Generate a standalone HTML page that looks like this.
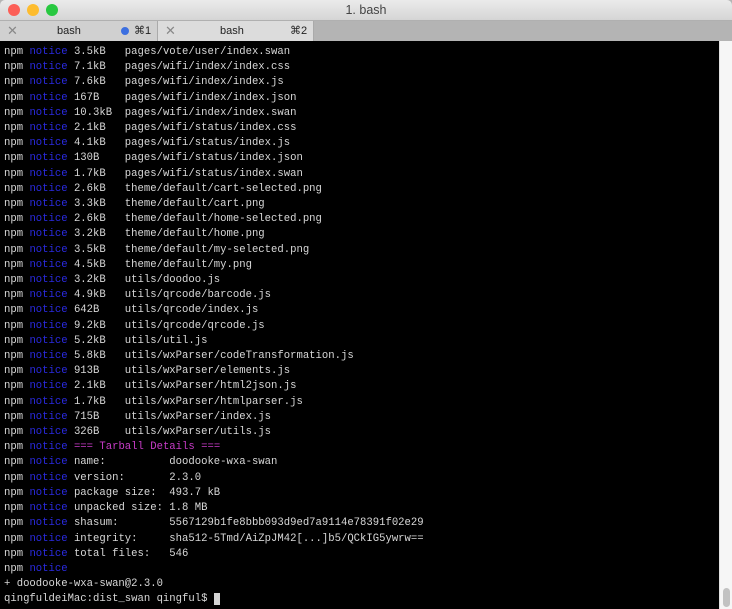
<!DOCTYPE html><html><head><style>
body{margin:0;width:732px;height:609px;overflow:hidden;background:#b4b4b4;font-family:"Liberation Sans",sans-serif}
#title{position:absolute;left:0;top:0;width:732px;height:20px;background:linear-gradient(#ebebeb,#d5d5d5);border-bottom:1px solid #b0b0b0;border-radius:5px 5px 0 0;text-align:center;font-size:12.5px;line-height:20px;color:#444}
.dot{position:absolute;top:4px;width:12px;height:12px;border-radius:50%}
#tabs{position:absolute;top:21px;left:0;width:732px;height:20px;background:#b4b4b4}
.tab{position:absolute;top:0;height:20px;font-size:11px;line-height:20px;color:#222}
#term{position:absolute;top:41px;left:0;width:719px;height:568px;background:#000}
pre{margin:0;padding:4px 0 0 4px;font-family:"Liberation Mono",monospace;font-size:10.6px;line-height:15.2px;color:#d8d8d8}
.b{color:#2a2ae0}.m{color:#c83cc8}
#sb{position:absolute;left:719px;top:41px;width:13px;height:568px;background:#f6f6f6;border-left:1px solid #e0e0e0}
</style></head><body>
<div id="title">1. bash</div>
<div class="dot" style="left:8px;background:#fc5f57"></div>
<div class="dot" style="left:27px;background:#fdbc2e"></div>
<div class="dot" style="left:46px;background:#28c840"></div>
<div id="tabs">
<div class="tab" style="left:0;width:157px;background:#d0d0d0;border-right:1px solid #aaa"><span style="position:absolute;left:7px;color:#888;font-size:13px">✕</span><span style="position:absolute;left:57px">bash</span><span style="position:absolute;left:121px;top:6px;width:8px;height:8px;border-radius:50%;background:#3c6fe0"></span><span style="position:absolute;left:134px">⌘1</span></div>
<div class="tab" style="left:158px;width:155px;background:#dcdcdc;border-right:1px solid #aaa"><span style="position:absolute;left:7px;color:#888;font-size:13px">✕</span><span style="position:absolute;left:62px">bash</span><span style="position:absolute;left:132px">⌘2</span></div>
</div>
<div id="term"><pre>npm <span class="b">notice</span> 3.5kB   pages/vote/user/index.swan
npm <span class="b">notice</span> 7.1kB   pages/wifi/index/index.css
npm <span class="b">notice</span> 7.6kB   pages/wifi/index/index.js
npm <span class="b">notice</span> 167B    pages/wifi/index/index.json
npm <span class="b">notice</span> 10.3kB  pages/wifi/index/index.swan
npm <span class="b">notice</span> 2.1kB   pages/wifi/status/index.css
npm <span class="b">notice</span> 4.1kB   pages/wifi/status/index.js
npm <span class="b">notice</span> 130B    pages/wifi/status/index.json
npm <span class="b">notice</span> 1.7kB   pages/wifi/status/index.swan
npm <span class="b">notice</span> 2.6kB   theme/default/cart-selected.png
npm <span class="b">notice</span> 3.3kB   theme/default/cart.png
npm <span class="b">notice</span> 2.6kB   theme/default/home-selected.png
npm <span class="b">notice</span> 3.2kB   theme/default/home.png
npm <span class="b">notice</span> 3.5kB   theme/default/my-selected.png
npm <span class="b">notice</span> 4.5kB   theme/default/my.png
npm <span class="b">notice</span> 3.2kB   utils/doodoo.js
npm <span class="b">notice</span> 4.9kB   utils/qrcode/barcode.js
npm <span class="b">notice</span> 642B    utils/qrcode/index.js
npm <span class="b">notice</span> 9.2kB   utils/qrcode/qrcode.js
npm <span class="b">notice</span> 5.2kB   utils/util.js
npm <span class="b">notice</span> 5.8kB   utils/wxParser/codeTransformation.js
npm <span class="b">notice</span> 913B    utils/wxParser/elements.js
npm <span class="b">notice</span> 2.1kB   utils/wxParser/html2json.js
npm <span class="b">notice</span> 1.7kB   utils/wxParser/htmlparser.js
npm <span class="b">notice</span> 715B    utils/wxParser/index.js
npm <span class="b">notice</span> 326B    utils/wxParser/utils.js
npm <span class="b">notice</span> <span class="m">=== Tarball Details ===</span>
npm <span class="b">notice</span> name:          doodooke-wxa-swan
npm <span class="b">notice</span> version:       2.3.0
npm <span class="b">notice</span> package size:  493.7 kB
npm <span class="b">notice</span> unpacked size: 1.8 MB
npm <span class="b">notice</span> shasum:        5567129b1fe8bbb093d9ed7a9114e78391f02e29
npm <span class="b">notice</span> integrity:     sha512-5Tmd/AiZpJM42[...]b5/QCkIG5ywrw==
npm <span class="b">notice</span> total files:   546
npm <span class="b">notice</span>
+ doodooke-wxa-swan@2.3.0
qingfuldeiMac:dist_swan qingful$ <span style="background:#d4d4d4">&nbsp;</span></pre></div>
<div id="sb"><div style="position:absolute;left:3px;top:547px;width:7px;height:19px;border-radius:4px;background:#c2c2c2"></div></div>
</body></html>
